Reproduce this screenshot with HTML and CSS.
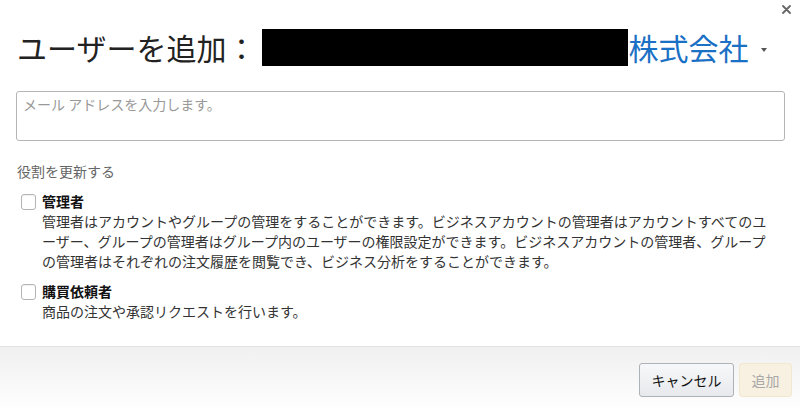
FILE: index.html
```html
<!DOCTYPE html>
<html lang="ja">
<head>
<meta charset="utf-8">
<title>ユーザーを追加</title>
<link rel="stylesheet" href="styles.css">
</head>
<body>
<div class="dialog">
  <button class="close" aria-label="閉じる">
    <svg width="9" height="9" viewBox="0 0 9 9"><path d="M1 1L8 8M8 1L1 8" stroke="#666" stroke-width="1.8" stroke-linecap="round"/></svg>
  </button>
  <div class="body">
    <h1 class="title">ユーザーを追加：<span class="redact"></span><span class="company">株式会社</span><span class="caret"></span></h1>
    <div class="email">メール アドレスを入力します。</div>
    <div class="section-label">役割を更新する</div>
    <div class="role">
      <span class="check"></span>
      <div class="role-text">
        <div class="role-name">管理者</div>
        <div class="role-desc">管理者はアカウントやグループの管理をすることができます。ビジネスアカウントの管理者はアカウントすべてのユ<br>ーザー、グループの管理者はグループ内のユーザーの権限設定ができます。ビジネスアカウントの管理者、グループ<br>の管理者はそれぞれの注文履歴を閲覧でき、ビジネス分析をすることができます。</div>
      </div>
    </div>
    <div class="role">
      <span class="check"></span>
      <div class="role-text">
        <div class="role-name">購買依頼者</div>
        <div class="role-desc">商品の注文や承認リクエストを行います。</div>
      </div>
    </div>
  </div>
  <div class="footer">
    <button class="btn cancel">キャンセル</button>
    <button class="btn add" disabled>追加</button>
  </div>
</div>
</body>
</html>
```

FILE: styles.css
```css
html, body {
  margin: 0;
  padding: 0;
  background: #fff;
}
body {
  font-family: "Noto Sans CJK JP", "Noto Sans", sans-serif;
  color: #333;
  width: 800px;
  height: 409px;
  overflow: hidden;
}
.dialog {
  position: relative;
  height: 409px;
  display: flex;
  flex-direction: column;
}
.close {
  position: absolute;
  top: 4px;
  right: 8px;
  border: 0;
  background: none;
  padding: 0;
  width: 11px;
  height: 11px;
  display: flex;
  align-items: center;
  justify-content: center;
}
.body {
  padding: 29px 15px 0 16px;
  flex: 1;
}
.title {
  margin: 0 0 0 1px;
  font-size: 30px;
  font-weight: 400;
  line-height: 37px;
  height: 37px;
  color: #222;
  display: flex;
  align-items: center;
  white-space: nowrap;
}
.redact {
  display: inline-block;
  width: 366px;
  height: 37px;
  background: #000;
  margin-left: 6px;
}
.company {
  color: #1a70c4;
  margin-left: 0;
}
.caret {
  display: inline-block;
  width: 0;
  height: 0;
  border-left: 3.5px solid transparent;
  border-right: 3.5px solid transparent;
  border-top: 4px solid #555;
  margin-left: 13px;
  margin-top: 4px;
}
.email {
  margin-top: 25px;
  height: 46px;
  border: 1px solid #b5b5b5;
  border-radius: 3px;
  padding: 2px 6px 0;
  font-size: 14px;
  line-height: 20px;
  color: #999;
  box-sizing: content-box;
}
.section-label {
  margin-top: 20px;
  margin-left: 1px;
  font-size: 14px;
  line-height: 20px;
  color: #666;
}
.role {
  display: flex;
  align-items: flex-start;
  margin-top: 10px;
  margin-left: 5px;
}
.role + .role {
  margin-top: 10px;
}
.check {
  width: 13px;
  height: 14px;
  border: 1px solid #b4b4b4;
  border-radius: 3px;
  background: #fff;
  box-shadow: inset 0 1px 1px rgba(0,0,0,0.06);
  margin-top: 3px;
  flex: none;
}
.role-text {
  margin-left: 6px;
}
.role-name {
  font-size: 14px;
  line-height: 20px;
  font-weight: 700;
  color: #111;
}
.role-desc {
  font-size: 14px;
  line-height: 20px;
  color: #333;
  white-space: nowrap;
}
.footer {
  height: 63px;
  border-top: 1px solid #e3e3e3;
  background: linear-gradient(#f0f0f0, #fefefe);
  display: flex;
  justify-content: flex-end;
  align-items: flex-start;
  gap: 5px;
  padding: 16px 8px 0 0;
  box-sizing: border-box;
}
.btn {
  height: 34px;
  border-radius: 3px;
  font-family: "Noto Sans CJK JP", "Noto Sans", sans-serif;
  font-size: 14px;
  padding: 0;
}
.cancel {
  width: 95px;
  border: 1px solid #adb1b8;
  background: linear-gradient(#f7f8fa, #e7e9ec);
  color: #111;
}
.add {
  width: 53px;
  border: 1px solid #f2e7cf;
  background: #f8f1e2;
  color: #a8a8a8;
}
```
